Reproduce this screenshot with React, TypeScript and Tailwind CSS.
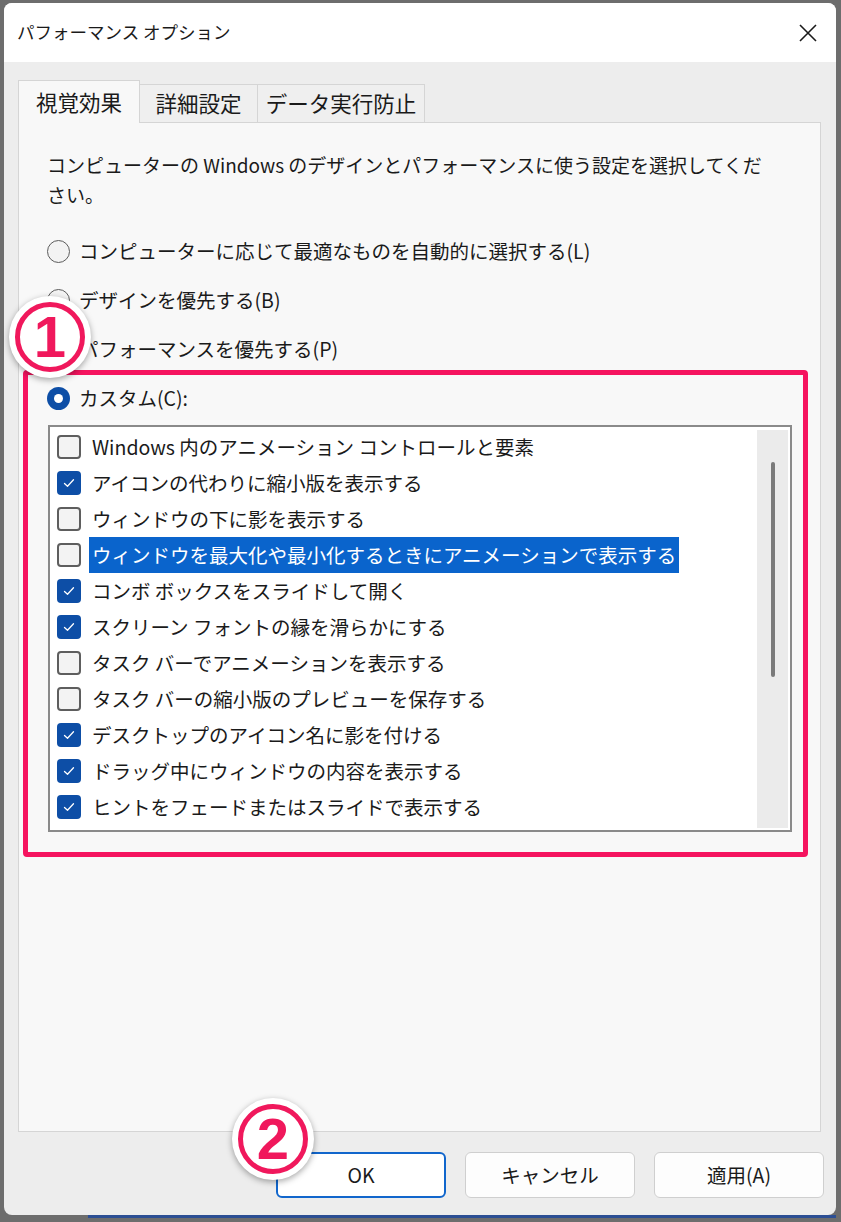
import React from 'react'

const items = [
  { label: 'Windows 内のアニメーション コントロールと要素', checked: false },
  { label: 'アイコンの代わりに縮小版を表示する', checked: true },
  { label: 'ウィンドウの下に影を表示する', checked: false },
  { label: 'ウィンドウを最大化や最小化するときにアニメーションで表示する', checked: false, selected: true },
  { label: 'コンボ ボックスをスライドして開く', checked: true },
  { label: 'スクリーン フォントの縁を滑らかにする', checked: true },
  { label: 'タスク バーでアニメーションを表示する', checked: false },
  { label: 'タスク バーの縮小版のプレビューを保存する', checked: false },
  { label: 'デスクトップのアイコン名に影を付ける', checked: true },
  { label: 'ドラッグ中にウィンドウの内容を表示する', checked: true },
  { label: 'ヒントをフェードまたはスライドで表示する', checked: true }
]

function Radio({ checked, label }: { checked?: boolean; label: string }) {
  return (
    <div className="flex items-center h-[30px]">
      {checked ? (
        <span className="w-[23px] h-[23px] rounded-full bg-[#0d4ea6] flex items-center justify-center">
          <span className="w-[9px] h-[9px] rounded-full bg-white" />
        </span>
      ) : (
        <span className="w-[23px] h-[23px] rounded-full border-[1.5px] border-[#5c5c5c] bg-[#f3f3f3]" />
      )}
      <span className="ml-[9px]">{label}</span>
    </div>
  )
}

function Checkbox({ checked }: { checked: boolean }) {
  if (checked) {
    return (
      <span className="w-[24px] h-[24px] shrink-0 rounded-[4px] bg-[#0d4ea6] flex items-center justify-center">
        <svg width="14" height="14" viewBox="0 0 14 14" fill="none">
          <path d="M2.5 7.5 L5.5 10.2 L11.5 3.8" stroke="white" strokeWidth="1.3" strokeLinecap="round" strokeLinejoin="round" />
        </svg>
      </span>
    )
  }
  return <span className="w-[24px] h-[24px] shrink-0 rounded-[4px] border-2 border-[#5e5e5e] bg-[#f3f3f3]" />
}

function Marker({ n, className }: { n: string; className: string }) {
  return (
    <div className={`absolute w-[82px] h-[82px] rounded-full bg-white shadow-[0_2px_6px_rgba(0,0,0,0.35)] flex items-center justify-center ${className}`}>
      <div className="w-[70px] h-[70px] rounded-full border-[5px] border-[#f0185c] flex items-center justify-center">
        <span className="text-[#f0185c] text-[58px] font-black leading-none font-['Liberation_Sans',sans-serif]">{n}</span>
      </div>
    </div>
  )
}

export default function App() {
  return (
    <div className="relative w-[841px] h-[1222px] bg-[#6d6d6d] pt-[3px] pl-[4px] pr-[5px] overflow-hidden font-['Noto_Sans_CJK_JP','Noto_Sans',sans-serif] text-[#1a1a1a]">
      <div className="h-[1212px] rounded-[8px] bg-[#ededed] flex flex-col overflow-hidden">
        {/* Title bar */}
        <div className="h-[59px] bg-white flex items-center justify-between pl-[13px] pr-[18px]">
          <span className="text-[17.5px]">パフォーマンス オプション</span>
          <svg width="20" height="20" viewBox="0 0 20 20">
            <path d="M2 2 L18 18 M18 2 L2 18" stroke="#1a1a1a" strokeWidth="1.6" />
          </svg>
        </div>

        <div className="flex-1 flex flex-col pl-[14px] pr-[15px]">
          {/* Tabs */}
          <div className="flex items-end h-[60px] pt-[18px] text-[21.5px]">
            <div className="relative z-10 w-[122px] h-[43px] -mb-px bg-[#f8f8f8] border border-b-0 border-[#d5d5d5] flex items-center justify-center">
              視覚効果
            </div>
            <div className="w-[118px] h-[38px] bg-[#efefef] border border-l-0 border-b-0 border-[#d5d5d5] flex items-center justify-center">
              詳細設定
            </div>
            <div className="w-[167px] h-[38px] bg-[#efefef] border border-l-0 border-b-0 border-[#d5d5d5] flex items-center justify-center">
              データ実行防止
            </div>
          </div>

          {/* Panel */}
          <div className="h-[1010px] bg-[#f8f8f8] border border-[#d5d5d5] pl-[28px] pr-[28px] pt-[27px] text-[19.5px]">
            <p className="text-[19px] leading-[30px] whitespace-nowrap">
              コンピューターの Windows のデザインとパフォーマンスに使う設定を選択してくだ
              <br />
              さい。
            </p>
            <div className="mt-[26px] flex flex-col gap-[19px]">
              <Radio label="コンピューターに応じて最適なものを自動的に選択する(L)" />
              <Radio label="デザインを優先する(B)" />
              <Radio label="パフォーマンスを優先する(P)" />
              <Radio checked label="カスタム(C):" />
            </div>

            {/* List */}
            <div className="mt-[12px] ml-[1px] h-[407px] border-2 border-[#8a8a8a] bg-white flex overflow-hidden">
              <div className="flex-1 pt-[2px] pl-[7px] overflow-hidden">
                {items.map((it) => (
                  <div key={it.label} className="h-[36px] flex items-center">
                    <Checkbox checked={it.checked} />
                    <span
                      className={`ml-[8px] pl-[3px] pr-[3px] h-[36px] flex items-center whitespace-nowrap ${
                        it.selected ? 'bg-[#0a64cc] text-white' : ''
                      }`}
                    >
                      {it.label}
                    </span>
                  </div>
                ))}
              </div>
              <div className="w-[31px] mt-[3px] mb-[2px] mr-[2px] bg-[#ebebeb] flex justify-center pt-[32px]">
                <div className="w-[4px] h-[215px] rounded-full bg-[#7a7a7a]" />
              </div>
            </div>
          </div>

          {/* Buttons */}
          <div className="flex justify-end gap-[19px] pt-[20px] text-[19.5px] mr-[-3px]">
            <button className="w-[170px] h-[46px] rounded-[6px] border-2 border-[#1166cc] bg-white">OK</button>
            <button className="w-[170px] h-[46px] rounded-[6px] border border-[#cfcfcf] bg-[#fdfdfd]">キャンセル</button>
            <button className="w-[170px] h-[46px] rounded-[6px] border border-[#cfcfcf] bg-[#fdfdfd]">適用(A)</button>
          </div>
        </div>
      </div>
      <div className="flex h-[7px]">
        <div className="w-[84px]" />
        <div className="flex-1 h-[3px] bg-[#2c4f94]" />
      </div>

      {/* Annotations */}
      <div className="absolute left-[23px] top-[370px] w-[785px] h-[487px] border-[5px] border-[#f5145f] rounded-[4px]" />
      <Marker n="1" className="left-[9px] top-[296px]" />
      <Marker n="2" className="left-[232px] top-[1098px]" />
    </div>
  )
}
